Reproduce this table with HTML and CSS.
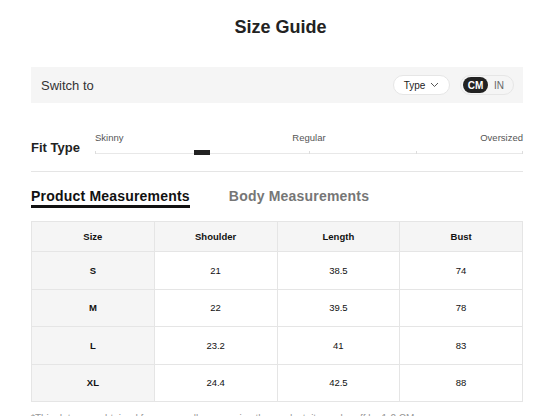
FILE: index.html
```html
<!DOCTYPE html>
<html>
<head>
<meta charset="utf-8">
<link rel="stylesheet" href="styles.css">
</head>
<body>
<div class="page">
  <h1 class="title">Size Guide</h1>

  <div class="switch-bar">
    <span class="switch-label">Switch to</span>
    <div class="switch-controls">
      <div class="type-pill">Type
        <svg class="chev" width="9" height="6" viewBox="0 0 9 6"><path d="M1 1l3.5 3.5L8 1" fill="none" stroke="#555" stroke-width="1"/></svg>
      </div>
      <div class="unit-toggle">
        <span class="unit active">CM</span>
        <span class="unit">IN</span>
      </div>
    </div>
  </div>

  <div class="fit-row">
    <div class="fit-label">Fit Type</div>
    <div class="fit-slider">
      <div class="fit-labels">
        <span class="fl-left">Skinny</span>
        <span class="fl-mid">Regular</span>
        <span class="fl-right">Oversized</span>
      </div>
      <div class="track">
        <span class="line"></span>
        <span class="tick t0"></span>
        <span class="tick t2"></span>
        <span class="tick t3"></span>
        <span class="tick t4"></span>
        <span class="thumb"></span>
      </div>
    </div>
  </div>

  <div class="tabs">
    <span class="tab active">Product Measurements</span>
    <span class="tab">Body Measurements</span>
  </div>

  <table class="size-table">
    <thead>
      <tr><th>Size</th><th>Shoulder</th><th>Length</th><th>Bust</th></tr>
    </thead>
    <tbody>
      <tr><th>S</th><td>21</td><td>38.5</td><td>74</td></tr>
      <tr><th>M</th><td>22</td><td>39.5</td><td>78</td></tr>
      <tr><th>L</th><td>23.2</td><td>41</td><td>83</td></tr>
      <tr><th>XL</th><td>24.4</td><td>42.5</td><td>88</td></tr>
    </tbody>
  </table>

  <p class="note">*This data was obtained from manually measuring the product, it may be off by 1-2 CM.</p>
</div>
</body>
</html>
```

FILE: styles.css
```css
html, body {
  margin: 0;
  padding: 0;
  background: #fff;
  font-family: "Liberation Sans", Arial, sans-serif;
  color: #222;
}

.page {
  width: 492px;
  margin-left: 31px;
}

.title {
  margin: 0;
  padding-top: 16px;
  padding-left: 7px;
  font-size: 18px;
  line-height: 22px;
  font-weight: bold;
  text-align: center;
  color: #222;
}

.switch-bar {
  margin-top: 29px;
  height: 36px;
  background: #f5f5f5;
  display: flex;
  align-items: center;
  justify-content: space-between;
  padding: 0 9px 0 10px;
}

.switch-label {
  font-size: 13px;
  color: #333;
}

.switch-controls {
  display: flex;
  align-items: center;
  gap: 10px;
}

.type-pill {
  box-sizing: border-box;
  width: 57px;
  height: 20px;
  border: 1px solid #e6e6e6;
  border-radius: 10px;
  background: #fff;
  display: flex;
  align-items: center;
  justify-content: center;
  gap: 5px;
  font-size: 10px;
  color: #222;
}

.chev {
  display: block;
}

.unit-toggle {
  box-sizing: border-box;
  width: 54px;
  height: 20px;
  border: 1px solid #e6e6e6;
  border-radius: 10px;
  display: flex;
  align-items: center;
  padding-left: 2px;
  gap: 6px;
}

.unit {
  font-size: 10px;
  color: #666;
}

.unit.active {
  width: 25px;
  height: 16px;
  border-radius: 8px;
  background: #222;
  color: #fff;
  font-weight: bold;
  display: flex;
  align-items: center;
  justify-content: center;
}

.fit-row {
  margin-top: 29px;
  display: flex;
  align-items: flex-end;
  padding-bottom: 13px;
  border-bottom: 1px solid #e5e5e5;
}

.fit-label {
  width: 64px;
  font-size: 13px;
  font-weight: bold;
  line-height: 16px;
  color: #222;
  margin-bottom: 2px;
}

.fit-slider {
  flex: 1;
}

.fit-labels {
  display: grid;
  grid-template-columns: 1fr auto 1fr;
  font-size: 9.5px;
  line-height: 12px;
  color: #555;
}

.fl-left { text-align: left; }
.fl-mid { text-align: center; }
.fl-right { text-align: right; }

.track {
  position: relative;
  height: 14px;
}

.line {
  position: absolute;
  left: 0;
  right: 0;
  top: 9px;
  height: 1px;
  background: #e8e8e8;
}

.tick {
  position: absolute;
  top: 7px;
  width: 1px;
  height: 3px;
  background: #ddd;
}
.t0 { left: 0; }
.t2 { left: 50%; }
.t3 { left: 75%; }
.t4 { right: 0; }

.thumb {
  position: absolute;
  top: 6px;
  left: 99px;
  width: 16px;
  height: 5px;
  background: #222;
}

.tabs {
  margin-top: 15px;
  display: flex;
  gap: 39px;
}

.tab {
  font-size: 14px;
  font-weight: bold;
  line-height: 18px;
  letter-spacing: 0.2px;
  color: #767676;
  border-bottom: 3px solid transparent;
}

.tab.active {
  color: #111;
  border-bottom-color: #111;
}

.size-table {
  margin-top: 13px;
  width: 492px;
  border-collapse: collapse;
  table-layout: fixed;
}

.size-table th,
.size-table td {
  border: 1px solid #e5e5e5;
  text-align: center;
  font-size: 9.5px;
  color: #111;
  padding: 0;
}

.size-table thead th {
  height: 29px;
  background: #f5f5f5;
  font-weight: bold;
}

.size-table tbody th,
.size-table tbody td {
  height: 36.5px;
}

.size-table tbody th {
  background: #f5f5f5;
  font-weight: bold;
}

.note {
  margin: 10px 0 0;
  font-size: 10px;
  line-height: 14px;
  color: #999;
}
```
